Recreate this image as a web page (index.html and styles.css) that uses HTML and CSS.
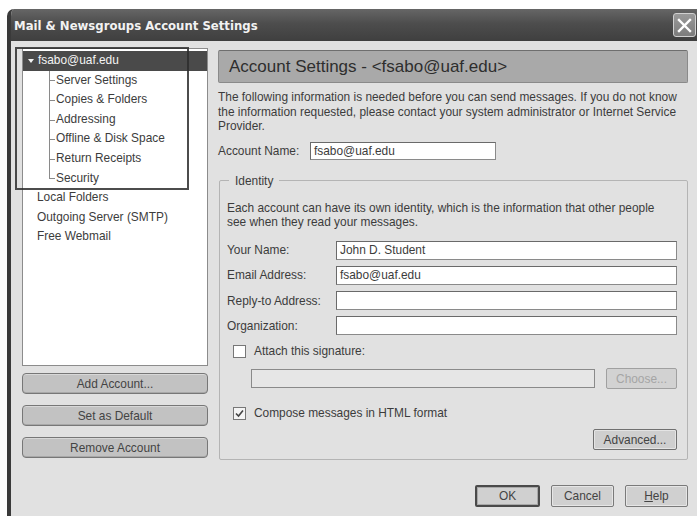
FILE: index.html
```html
<!DOCTYPE html>
<html>
<head>
<meta charset="utf-8">
<title>Mail &amp; Newsgroups Account Settings</title>
<link rel="stylesheet" href="styles.css">
</head>
<body>
<div class="window">
  <div class="titlebar">
    <span class="title">Mail &amp; Newsgroups Account Settings</span>
    <span class="close">
      <svg width="15" height="15" viewBox="0 0 15 15"><path d="M2 2 L13 13 M13 2 L2 13" stroke="#fff" stroke-width="2.4" stroke-linecap="square"/></svg>
    </span>
  </div>
  <div class="content">
    <div class="main">
      <div class="sidebar">
        <div class="tree">
          <div class="row selected"><span class="twisty"></span>fsabo@uaf.edu</div>
          <div class="children">
            <div class="row child">Server Settings</div>
            <div class="row child">Copies &amp; Folders</div>
            <div class="row child">Addressing</div>
            <div class="row child">Offline &amp; Disk Space</div>
            <div class="row child">Return Receipts</div>
            <div class="row child last">Security</div>
          </div>
          <div class="row top">Local Folders</div>
          <div class="row top">Outgoing Server (SMTP)</div>
          <div class="row top">Free Webmail</div>
        </div>
        <button class="btn side">Add Account...</button>
        <button class="btn side">Set as Default</button>
        <button class="btn side">Remove Account</button>
      </div>
      <div class="panel">
        <div class="header">Account Settings - &lt;fsabo@uaf.edu&gt;</div>
        <p class="intro">The following information is needed before you can send messages. If you do not know<br>the information requested, please contact your system administrator or Internet Service<br>Provider.</p>
        <div class="name-row">
          <label class="name-label">Account Name:</label>
          <div class="input name-input">fsabo@uaf.edu</div>
        </div>
        <fieldset class="identity">
          <legend>Identity</legend>
          <p class="identity-text">Each account can have its own identity, which is the information that other people<br>see when they read your messages.</p>
          <div class="form-grid">
            <label>Your Name:</label><div class="input">John D. Student</div>
            <label>Email Address:</label><div class="input">fsabo@uaf.edu</div>
            <label>Reply-to Address:</label><div class="input"></div>
            <label>Organization:</label><div class="input"></div>
          </div>
          <div class="check-row sig-check"><span class="checkbox"></span>Attach this signature:</div>
          <div class="sig-row">
            <div class="input disabled"></div>
            <button class="btn choose" disabled>Choose...</button>
          </div>
          <div class="check-row html-check"><span class="checkbox checked"><svg width="11" height="11" viewBox="0 0 11 11"><path d="M2 5.5 L4.5 8 L9 2.5" fill="none" stroke="#444" stroke-width="1.6"/></svg></span>Compose messages in HTML format</div>
          <div class="adv-row"><button class="btn advanced">Advanced...</button></div>
        </fieldset>
      </div>
    </div>
    <div class="footer">
      <button class="btn dlg default">OK</button>
      <button class="btn dlg">Cancel</button>
      <button class="btn dlg"><u>H</u>elp</button>
    </div>
  </div>
  <div class="focus-ring"></div>
</div>
</body>
</html>
```
FILE: styles.css
```css
* { box-sizing: border-box; }

body {
  margin: 0;
  padding: 9px 0 0 7px;
  background: #fff;
  font-family: "Liberation Sans", Arial, sans-serif;
  font-size: 11.9px;
  color: #3c3c3c;
  overflow: hidden;
}

.window {
  position: relative;
  width: 690px;
  height: 507px;
  background: #e1e1e1;
  border-left: 4px solid #3a3a3a;
  border-top-left-radius: 7px;
  overflow: hidden;
}

/* title bar */
.titlebar {
  height: 32px;
  background: linear-gradient(#666, #4d4d4d 45%, #3f3f3f);
  display: flex;
  align-items: center;
  justify-content: space-between;
  padding: 2px 1px 0 3px;
}
.title {
  font-family: "DejaVu Sans", Verdana, sans-serif;
  font-weight: bold;
  font-size: 11.7px;
  color: #f2f2f2;
}
.close {
  width: 23px;
  height: 24px;
  margin-top: -2px;
  border: 1px solid #d0d0d0;
  border-radius: 3px;
  background: linear-gradient(#9a9a9a, #7c7c7c);
  display: flex;
  align-items: center;
  justify-content: center;
}

.content {
  padding: 7px 9px 0 11px;
}
.main {
  display: flex;
  gap: 10px;
}

/* left column */
.sidebar {
  width: 186px;
  display: flex;
  flex-direction: column;
}
.tree {
  height: 318px;
  background: #fff;
  border: 1px solid #8c8c8c;
  padding-top: 2px;
}
.row {
  height: 19.6px;
  line-height: 19.6px;
  white-space: nowrap;
}
.row.selected {
  background: #4a4a4a;
  color: #f4f4f4;
  padding-left: 5px;
  display: flex;
  align-items: center;
}
.twisty {
  width: 0;
  height: 0;
  border-left: 3px solid transparent;
  border-right: 3px solid transparent;
  border-top: 4px solid #f4f4f4;
  margin-right: 4px;
}
.children {
  position: relative;
}
.row.child {
  position: relative;
  padding-left: 33px;
}
.row.child::before {
  content: "";
  position: absolute;
  left: 26px;
  top: 0;
  bottom: 0;
  border-left: 1px solid #8a8a8a;
}
.row.child.last::before {
  bottom: 50%;
}
.row.child::after {
  content: "";
  position: absolute;
  left: 26px;
  top: 50%;
  width: 6px;
  border-top: 1px solid #8a8a8a;
}
.row.top {
  padding-left: 14px;
}

.btn {
  font-family: "Liberation Sans", Arial, sans-serif;
  font-size: 11.9px;
  color: #444;
  padding: 0;
  cursor: default;
}
.btn.side {
  height: 21px;
  background: #c2c2c2;
  border: 1px solid #777;
  border-radius: 4px;
  box-shadow: inset 0 1px 0 #d8d8d8, inset 0 -1px 0 #a8a8a8;
}
.tree + .btn.side { margin-top: 7px; }
.btn.side + .btn.side { margin-top: 11px; }

/* right column */
.panel {
  width: 470px;
  padding-top: 2px;
}
.header {
  height: 33px;
  background: #a9a9a9;
  border: 1px solid #8a8a8a;
  border-top-color: #6e6e6e;
  border-radius: 2px;
  padding-left: 10px;
  font-size: 17px;
  line-height: 31px;
  color: #2e2e2e;
}
.intro {
  margin: 7px 0 0;
  line-height: 14.5px;
  white-space: nowrap;
}
.name-row {
  display: flex;
  align-items: center;
  margin-top: 8px;
}
.name-label {
  width: 92px;
}
.input {
  height: 18px;
  background: #fff;
  border: 1px solid #8a8a8a;
  border-top-color: #6a6a6a;
  border-left-color: #6a6a6a;
  padding-left: 3px;
  line-height: 16px;
  white-space: nowrap;
}
.name-input {
  width: 186px;
}

.identity {
  margin: 14px 0 0 1px;
  padding: 0 10px 9px 7px;
  border: 1px solid #b4b4b4;
  border-radius: 2px;
}
.identity legend {
  padding: 0 6px;
  margin-left: 2px;
  line-height: 14px;
}
.identity-text {
  margin: 13px 0 0;
  line-height: 14px;
  white-space: nowrap;
}
.form-grid {
  display: grid;
  grid-template-columns: 109px 1fr;
  row-gap: 6.3px;
  align-items: center;
  margin-top: 12px;
}
.form-grid .input {
  height: 19px;
  line-height: 17px;
}
.check-row {
  display: flex;
  align-items: center;
  height: 14px;
  line-height: 14px;
  padding-left: 6px;
}
.checkbox {
  width: 13px;
  height: 13px;
  border: 1px solid #777;
  background: #fff;
  margin-right: 8px;
  display: flex;
  align-items: center;
  justify-content: center;
}
.checkbox.checked {
  background: #f4f4f4;
}
.sig-check {
  margin-top: 9px;
}
.sig-row {
  display: flex;
  align-items: center;
  justify-content: space-between;
  margin-top: 10px;
  padding-left: 24px;
}
.input.disabled {
  width: 344px;
  height: 19px;
  background: #e6e6e6;
  border-color: #8a8a8a;
}
.btn.choose {
  width: 71px;
  height: 21px;
  background: #d2d2d2;
  border: 1px solid #a0a0a0;
  border-radius: 2px;
  color: #a5a5a5;
}
.html-check {
  margin-top: 17px;
}
.adv-row {
  display: flex;
  justify-content: flex-end;
  margin-top: 9px;
}
.btn.advanced {
  width: 84px;
  height: 21px;
  background: #cfcfcf;
  border: 1px solid #707070;
  border-radius: 2px;
  box-shadow: inset 0 0 0 1px #e4e4e4;
}

/* dialog buttons */
.footer {
  display: flex;
  justify-content: flex-end;
  gap: 11px;
  margin-top: 25px;
}
.btn.dlg {
  width: 63px;
  height: 22px;
  background: #d0d0d0;
  border: 1px solid #7a7a7a;
  border-radius: 2px;
  box-shadow: inset 0 0 0 1px #e6e6e6;
}
.btn.dlg.default {
  width: 65px;
  border: 2px solid #4a4a4a;
  box-shadow: inset 0 0 0 1px #a8a8a8;
}

/* focus outline around the selected account */
.focus-ring {
  position: absolute;
  left: 4px;
  top: 38px;
  width: 174px;
  height: 143px;
  border: 2px solid rgba(45, 45, 45, 0.85);
  pointer-events: none;
}
```
